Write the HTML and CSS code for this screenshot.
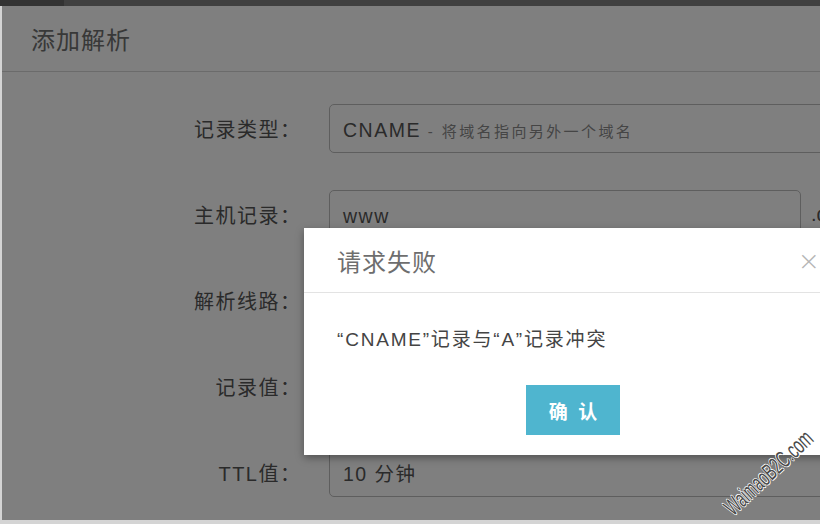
FILE: index.html
```html
<!DOCTYPE html>
<html lang="zh-CN">
<head>
<meta charset="utf-8">
<title>添加解析</title>
<link rel="stylesheet" href="styles.css">
</head>
<body>
<div class="topbar"><div class="topbar-tab"></div></div>
<div class="stage">
  <div class="panel">
    <div class="panel-header">添加解析</div>
    <div class="form">
      <div class="row">
        <div class="label">记录类型<span class="colon">：</span></div>
        <div class="field field-wide">CNAME <span class="hint">- 将域名指向另外一个域名</span></div>
      </div>
      <div class="row">
        <div class="label">主机记录<span class="colon">：</span></div>
        <div class="field field-host">www</div>
        <div class="suffix">.domain.com</div>
      </div>
      <div class="row">
        <div class="label">解析线路<span class="colon">：</span></div>
        <div class="field field-wide">默认</div>
      </div>
      <div class="row">
        <div class="label">记录值<span class="colon">：</span></div>
        <div class="field field-wide"></div>
      </div>
      <div class="row">
        <div class="label">TTL值<span class="colon">：</span></div>
        <div class="field field-wide">10 分钟</div>
      </div>
    </div>
  </div>
  <div class="overlay"></div>
  <div class="dialog">
    <div class="dialog-header">
      <span class="dialog-title">请求失败</span>
      <span class="dialog-close">×</span>
    </div>
    <div class="dialog-body">
      <p class="dialog-msg">“CNAME”记录与“A”记录冲突</p>
      <button class="btn-ok">确 认</button>
    </div>
  </div>
</div>
<div class="watermark">WaimaoB2C.com</div>
</body>
</html>
```

FILE: styles.css
```css
html, body {
  margin: 0;
  padding: 0;
}
body {
  width: 820px;
  height: 524px;
  overflow: hidden;
  background: #d4d4d4;
  font-family: "Liberation Sans", "Noto Sans CJK SC", sans-serif;
  position: relative;
}
.topbar {
  height: 6px;
  background: #404040;
  display: flex;
}
.topbar-tab {
  width: 64px;
  background: #333333;
}
.stage {
  position: relative;
  margin-left: 2px;
  height: 514px;
  overflow: hidden;
}
.panel {
  background: #ffffff;
  height: 100%;
}
.panel-header {
  height: 65px;
  line-height: 66px;
  padding-left: 29px;
  font-size: 24px;
  letter-spacing: 1px;
  color: #707070;
  border-bottom: 1px solid #d6d6d6;
  font-family: "Noto Sans CJK SC", sans-serif;
}
.form {
  padding-top: 32px;
  display: flex;
  flex-direction: column;
  gap: 37px;
}
.row {
  display: flex;
  align-items: center;
  height: 49px;
}
.label {
  width: 298px;
  flex: none;
  text-align: right;
  font-size: 20px;
  letter-spacing: 1.5px;
  color: #555;
  font-family: "Liberation Sans", "Noto Sans CJK SC", sans-serif;
  white-space: nowrap;
}
.colon {
  font-family: "Noto Sans CJK TC", sans-serif;
  letter-spacing: 0;
}
.field {
  margin-left: 29px;
  height: 47px;
  line-height: 51px;
  border: 1px solid #bdbdbd;
  border-radius: 5px;
  padding-left: 13px;
  font-size: 19.5px;
  letter-spacing: 1.5px;
  color: #555;
  flex: none;
  white-space: nowrap;
  overflow: hidden;
}
.field-wide {
  width: 520px;
}
.field-host {
  width: 457px;
}
.hint {
  font-size: 15px;
  letter-spacing: 2.4px;
  color: #8a8a8a;
}
.suffix {
  margin-left: 10px;
  font-size: 20px;
  color: #555;
  white-space: nowrap;
}
.overlay {
  position: absolute;
  left: 0;
  top: 0;
  right: 0;
  bottom: 0;
  background: rgba(0, 0, 0, 0.5);
}
.dialog {
  position: absolute;
  left: 302px;
  top: 222px;
  width: 538px;
  background: #ffffff;
  box-shadow: 0 3px 8px rgba(0, 0, 0, 0.35);
}
.dialog-header {
  height: 64px;
  border-bottom: 1px solid #e3e3e3;
  display: flex;
  align-items: center;
  justify-content: space-between;
  padding: 0 22px 0 33px;
}
.dialog-title {
  font-size: 24px;
  letter-spacing: 1px;
  color: #6e6e6e;
  font-family: "Noto Sans CJK SC", sans-serif;
}
.dialog-close {
  font-size: 27px;
  color: #b5b5b5;
  font-family: "DejaVu Sans", sans-serif;
  font-weight: 300;
}
.dialog-body {
  padding: 33px 33px 20px;
  display: flex;
  flex-direction: column;
  align-items: center;
}
.dialog-msg {
  align-self: stretch;
  margin: 0;
  font-size: 19px;
  letter-spacing: 1.8px;
  line-height: 28px;
  color: #444;
  white-space: nowrap;
}
.btn-ok {
  margin-top: 31px;
  width: 94px;
  height: 50px;
  padding: 0;
  border: none;
  background: #4fb5cf;
  color: #ffffff;
  font-size: 19px;
  letter-spacing: 3px;
  text-indent: 3px;
  font-weight: bold;
  font-family: "Noto Sans CJK SC", sans-serif;
}
.watermark {
  position: absolute;
  left: 683px;
  top: 464px;
  width: 160px;
  text-align: center;
  transform: rotate(-43deg) scaleX(0.6);
  font-family: "Liberation Sans", sans-serif;
  font-size: 24px;
  color: #4a4a4a;
  text-shadow: 1px 0 0 #fff, -1px 0 0 #fff, 0 1px 0 #fff, 0 -1px 0 #fff;
  white-space: nowrap;
}
```
